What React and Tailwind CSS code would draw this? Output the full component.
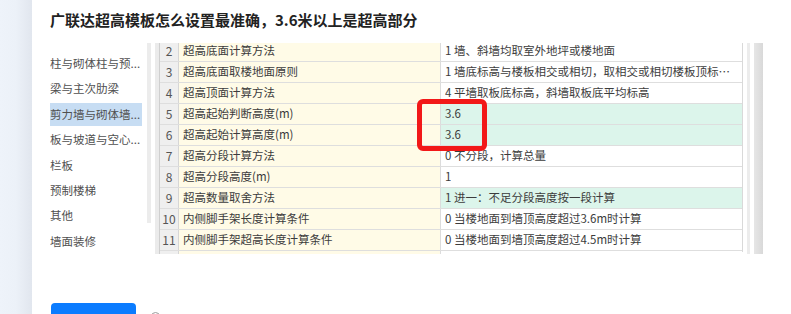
const sideItems = [
  { label: "柱与砌体柱与预..." },
  { label: "梁与主次肋梁" },
  { label: "剪力墙与砌体墙...", active: true },
  { label: "板与坡道与空心..." },
  { label: "栏板" },
  { label: "预制楼梯" },
  { label: "其他" },
  { label: "墙面装修" },
];

const rows = [
  { n: 2, name: "超高底面计算方法", value: "1 墙、斜墙均取室外地坪或楼地面" },
  { n: 3, name: "超高底面取楼地面原则", value: "1 墙底标高与楼板相交或相切，取相交或相切楼板顶标高与墙顶标高较小值" },
  { n: 4, name: "超高顶面计算方法", value: "4 平墙取板底标高，斜墙取板底平均标高" },
  { n: 5, name: "超高起始判断高度(m)", value: "3.6", green: true },
  { n: 6, name: "超高起始计算高度(m)", value: "3.6", green: true },
  { n: 7, name: "超高分段计算方法", value: "0 不分段，计算总量" },
  { n: 8, name: "超高分段高度(m)", value: "1" },
  { n: 9, name: "超高数量取舍方法", value: "1 进一：不足分段高度按一段计算", green: true },
  { n: 10, name: "内侧脚手架长度计算条件", value: "0 当楼地面到墙顶高度超过3.6m时计算" },
  { n: 11, name: "内侧脚手架超高长度计算条件", value: "0 当楼地面到墙顶高度超过4.5m时计算" },
  { n: 12, name: "内侧脚手架超高计算方法", value: "0 不计算" },
];

function Sidebar() {
  return (
    <div className="w-[97px] shrink-0 pt-[8px] flex flex-col">
      {sideItems.map((it) => (
        <div key={it.label} className="h-[26px] py-[1.5px]">
          <div
            className={`h-full w-[92px] flex items-center whitespace-nowrap text-[11.5px] text-[#505050] ${
              it.active ? "bg-[#c7ddf3]" : ""
            }`}
          >
            {it.label}
          </div>
        </div>
      ))}
    </div>
  );
}

function ParamTable() {
  return (
    <div className="flex h-full">
      {/* grid left gutter */}
      <div className="w-[5px] h-full bg-[#ebebeb] border-r border-[#cfcfcf]" />
      <div className="w-[583px] h-full border-r border-[#d9d9d9] -mt-[2px]">
        {rows.map((r) => (
          <div
            key={r.n}
            className="grid grid-cols-[19px_262px_301px] h-[21px] border-b border-[#dedede] text-[11.5px] leading-none text-[#3c3c3c]"
          >
            <div className="bg-[#efefef] border-r border-[#d6d6d6] flex items-center justify-center text-[12px] text-[#555]">
              {r.n}
            </div>
            <div className="bg-[#fffbe7] border-r border-[#dcdcdc] flex items-center pl-[4px] whitespace-nowrap overflow-hidden">
              {r.name}
            </div>
            <div
              className={`flex items-center pl-[4px] pr-[8px] min-w-0 ${
                r.green ? "bg-[#dcf5eb]" : "bg-white"
              }`}
            >
              <span className="truncate">{r.value}</span>
            </div>
          </div>
        ))}
      </div>
      {/* grid scrollbar */}
      <div className="w-[4px]" />
      <div className="w-[3px] h-full bg-[#ececec]" />
      <div className="w-[4px]" />
      <div className="w-[9px] h-full bg-gradient-to-r from-[#e6e6e6] to-[#d9d9d9]" />
    </div>
  );
}

export default function App() {
  return (
    <div
      className="h-[314px] w-full overflow-hidden flex bg-white"
      style={{ fontFamily: '"Noto Sans CJK SC", "Noto Sans", sans-serif' }}
    >
      <div className="w-[32px] shrink-0 bg-gradient-to-r from-[#eef3fa] via-[#ecf1f8] to-[#e1e6ee]" />
      <div className="pl-[18px] pt-[9px]">
        <h1 className="text-[15px] font-bold leading-[22px] text-[#222] whitespace-nowrap">
          广联达超高模板怎么设置最准确，3.6米以上是超高部分
        </h1>

        <div className="relative mt-[12px] flex h-[211px] w-[713px] overflow-hidden">
          <Sidebar />
          <div className="w-[4px] h-[180px] bg-[#ececec] shrink-0" />
          <div className="w-[4px] shrink-0" />
          <ParamTable />
          {/* red highlight box */}
          <div className="absolute left-[367px] top-[56px] w-[70px] h-[52px] border-[5px] border-[#f21818] rounded-[6px]" />
        </div>

        <div className="mt-[49px] flex items-start">
          <div className="ml-[1px] w-[85px] h-[36px] rounded-[4px] bg-[#0b7cff]" />
          <div className="ml-[15px] mt-[9px] w-[9px] h-[9px] rounded-full border border-[#9a9a9a]" />
        </div>
      </div>
    </div>
  );
}
